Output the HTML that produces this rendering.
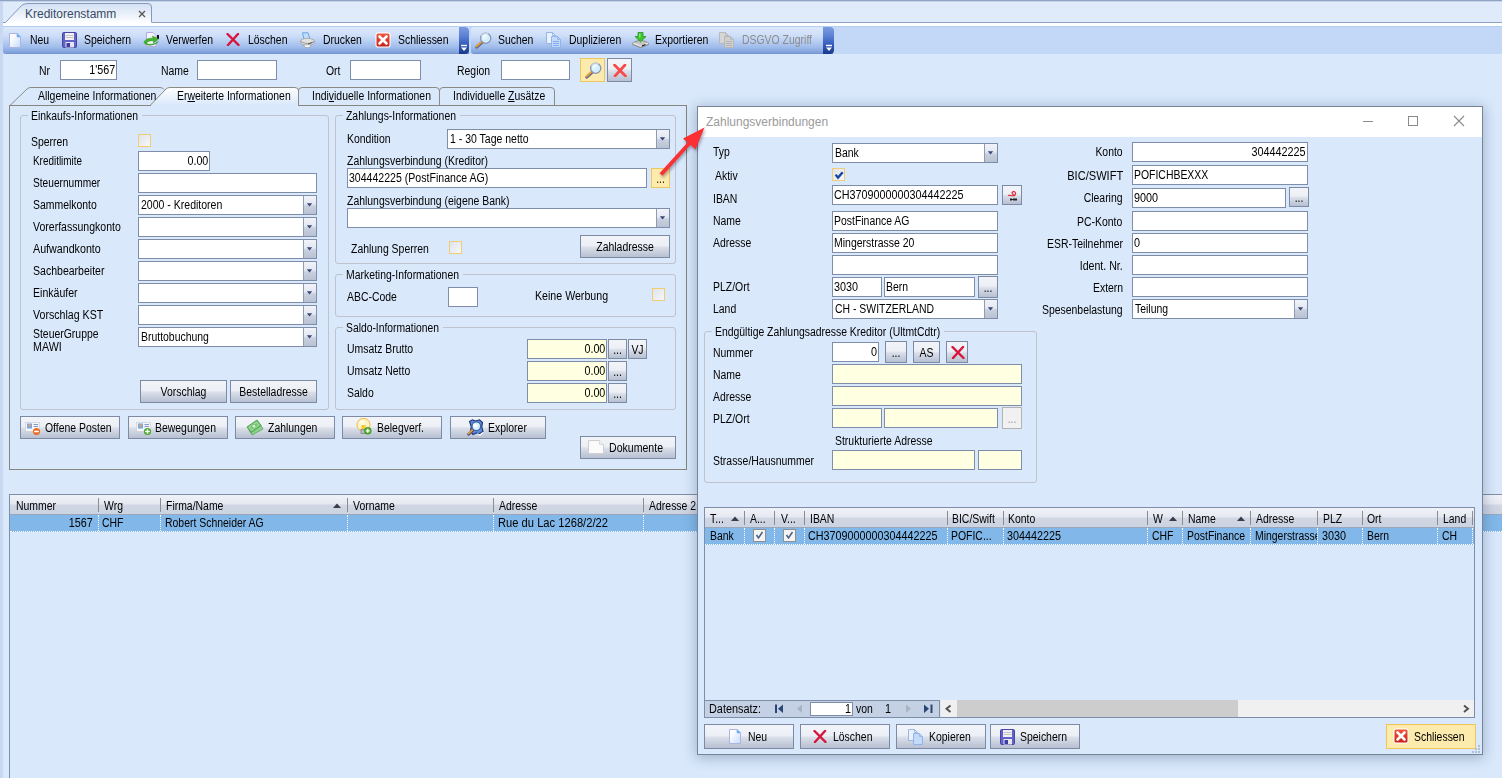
<!DOCTYPE html>
<html lang="de"><head><meta charset="utf-8"><title>Kreditorenstamm</title><style>
html,body{margin:0;padding:0}
body{width:1502px;height:778px;overflow:hidden;background:#d9e8fb;position:relative;font:12.5px "Liberation Sans",sans-serif;color:#000}
.a{position:absolute;box-sizing:border-box}
.t{white-space:nowrap;line-height:16px;font-size:12.5px;transform-origin:0 50%}
.r{transform-origin:100% 50% !important}
u{text-decoration:underline}
.f{border:1px solid #7f8ea8;background:#fff;overflow:hidden}
.ft{position:absolute;top:0;white-space:nowrap;font-size:12.5px;transform-origin:0 50%}
.dd{position:absolute;right:0;top:0;bottom:0;width:13px;box-sizing:border-box;border-left:1px solid #8f9cb4;background:linear-gradient(#f1f3f9 0%,#e4e8f1 45%,#c9d0de 55%,#b9c2d3 100%)}
.dd i{position:absolute;left:3px;top:8px;border:2.5px solid transparent;border-top:3px solid #33466f;border-bottom:none;width:0;height:0}
.b{border:1px solid #7d8aa3;background:linear-gradient(#f2f4f9 0%,#eceff5 45%,#d9dee8 55%,#b7c0d2 100%);text-align:center}
.b.hot{background:#fdeaad;border-color:#efc65c}
.b.dis{background:#f1f1f1;border-color:#b4b4b4;color:#9a9a9a}
.bt{display:block;white-space:nowrap;font-size:12.5px;transform-origin:50% 50%}
.ck{border:1px solid #f0cd72;background:linear-gradient(135deg,#dfe3ec,#f6f7fa)}
.g{border:1px solid #bfc3cb;border-radius:3px}
.tb{border-radius:3px 0 0 3px;background:linear-gradient(#dde9fb 0%,#cfdff8 30%,#b9cff3 52%,#9fbceb 75%,#7d9fda 96%,#6b8dcb 100%)}
.tbend{border-radius:0 4px 4px 0;background:linear-gradient(#7a9be0 0%,#5f84d6 30%,#3a62be 60%,#17388c 100%)}
.gh{background:linear-gradient(#f0f2f8 0%,#e6e9f1 45%,#d0d6e3 55%,#ccd3e1 100%);border-bottom:1px solid #9ba6bb}
.sel{background:#82b8e9;border-bottom:1px dotted #fff}
.dlg{border:1px solid #76849b;background:#d9e8fb;box-shadow:0 2px 12px 1px rgba(30,50,90,.30)}
</style></head><body>
<div class="a " style="left:0px;top:2px;width:1502px;height:21px;background:#dfeafb;"></div>
<div class="a " style="left:0px;top:0px;width:3px;height:778px;background:#c7d8f0;"></div>
<div class="a " style="left:0px;top:0px;width:1502px;height:1px;background:#8fa3c4;"></div>
<div class="a " style="left:0px;top:1px;width:1502px;height:1px;background:#c6d4e9;"></div>
<svg class="a" style="left:0;top:0" width="160" height="28" viewBox="0 0 160 28"><defs><linearGradient id="tg" x1="0" y1="0" x2="0" y2="1"><stop offset="0" stop-color="#d2e0f4"/><stop offset=".85" stop-color="#ffffff"/></linearGradient></defs><path d="M3 22.500 H5.500 L21.500 5.500 Q24 3.500 28 3.500 H148 Q151.500 3.500 151.500 7 V22.500 H160 V27 H3 Z" fill="url(#tg)"/><path d="M3 22.500 H5.500 L21.500 5.500 Q24 3.500 28 3.500 H148 Q151.500 3.500 151.500 7 V22.500" fill="none" stroke="#8699ba" stroke-width="1"/></svg>
<div class="a " style="left:152px;top:22px;width:1350px;height:1px;background:#8fa3c6;"></div>
<div class="a " style="left:3px;top:23px;width:1499px;height:3px;background:#fff;"></div>
<div class="a" style="left:25px;top:6px;font:12px 'Liberation Sans',sans-serif;color:#3a4a66;line-height:16px">Kreditorenstamm</div>
<svg class="a" style="left:138px;top:10px" width="8" height="8" viewBox="0 0 8 8"><path d="M1 1 L7 7 M7 1 L1 7" stroke="#555" stroke-width="1.3"/></svg>
<div class="a " style="left:3px;top:26px;width:1499px;height:28px;background:#c3d8f6;border-top:1px solid #b4cdf3;"></div>
<div class="a tb" style="left:3px;top:27px;width:466px;height:27px;"></div>
<div class="a tbend" style="left:459px;top:27px;width:10px;height:27px;"><svg class="a" style="left:1px;top:17px" width="8" height="8" viewBox="0 0 8 8"><path d="M1 1.5 H7" stroke="#fff" stroke-width="1.4"/><path d="M1 3.5 H7 L4 7 Z" fill="#fff"/><path d="M2 2.5 H8 L5 6 Z" fill="#000" opacity=".0"/></svg></div>
<div class="a tb" style="left:471px;top:27px;width:362px;height:27px;"></div>
<div class="a tbend" style="left:823px;top:27px;width:11px;height:27px;"><svg class="a" style="left:2px;top:17px" width="8" height="8" viewBox="0 0 8 8"><path d="M1 1.5 H7" stroke="#fff" stroke-width="1.4"/><path d="M1 3.5 H7 L4 7 Z" fill="#fff"/></svg></div>
<svg class="a" style="left:9px;top:33px" width="12" height="15" viewBox="0 0 12 15"><defs><linearGradient id="gn" x1="0" y1="0" x2="1" y2="1"><stop offset=".25" stop-color="#fff"/><stop offset="1" stop-color="#bfdcff"/></linearGradient></defs><path d="M0.5 0.5 H8 L11.5 4 V14.5 H0.5 Z" fill="url(#gn)" stroke="#b0b2e2" stroke-width="1"/><path d="M8 0.5 V4 H11.5 Z" fill="#5aa6f4" stroke="#8ab4ee" stroke-width=".6"/></svg>
<div class="a t" style="left:30px;top:32px;transform:scaleX(0.835);">Neu</div>
<svg class="a" style="left:62px;top:32px" width="15" height="16" viewBox="0 0 15 16"><rect x="0.5" y="0.5" width="14" height="15" rx="1.2" fill="#6262c9" stroke="#4545a4"/><rect x="3" y="1" width="9" height="7" fill="#f1f1f4"/><path d="M3.5 3.500 H11.500 M3.500 5.500 H11.500" stroke="#c4c4cb" stroke-width="1"/><rect x="3.500" y="10" width="8.500" height="5.500" fill="#e6e6f0"/><rect x="4.500" y="11" width="3.500" height="4" fill="#3c3ca2"/></svg>
<div class="a t" style="left:84px;top:32px;transform:scaleX(0.835);">Speichern</div>
<svg class="a" style="left:143px;top:32px" width="17" height="15" viewBox="0 0 17 15"><path d="M3.5 0.5 H10 L13 3.5 V14.5 H3.5 Z" fill="#f4f6ff" stroke="#b6a8e0"/><rect x="14" y="3" width="2" height="4" fill="#111"/><path d="M1 10.5 C2 6.5 8 5.5 10 6.5 L9.5 4 L15.5 7 L10.5 11 L10.2 8.8 C7 8.5 4 9.5 3.5 11.5 C6 13 11 12.5 15.5 9.5 C12 14 3 14.5 1 10.5 Z" fill="#3fb52a" stroke="#2a8c1a" stroke-width=".5"/></svg>
<div class="a t" style="left:166px;top:32px;transform:scaleX(0.835);">Verwerfen</div>
<svg class="a" style="left:226px;top:33px" width="14" height="13" viewBox="0 0 14 13"><path d="M1.5 1 L12.5 12 M12 1 L2 12" stroke="#d8143c" stroke-width="2.4" stroke-linecap="round" fill="none"/></svg>
<div class="a t" style="left:248px;top:32px;transform:scaleX(0.835);">Löschen</div>
<svg class="a" style="left:300px;top:32px" width="15" height="16" viewBox="0 0 15 16"><path d="M2.500 0.800 H8 L10 7.500 H4 Z" fill="#bfe0fb" stroke="#5f9ee2" stroke-width=".9"/><path d="M0.800 8 Q7 4.500 14.200 8 V11.500 Q8 16 0.800 11.500 Z" fill="#e2e2e2" stroke="#a2a2a2" stroke-width=".8"/><path d="M0.800 9.500 Q7.500 13.500 14.200 9.500" stroke="#8e8e8e" fill="none" stroke-width=".9"/><path d="M3.500 12.800 L5.500 15.600 H9.500 L11 12.800 Z" fill="#fafafa" stroke="#9a9a9a" stroke-width=".7"/><path d="M8 12 L12.500 10.500" stroke="#555" stroke-width="1"/></svg>
<div class="a t" style="left:323px;top:32px;transform:scaleX(0.835);">Drucken</div>
<svg class="a" style="left:375px;top:32px" width="16" height="16" viewBox="0 0 16 16"><defs><linearGradient id="gc375" x1="0" y1="0" x2="0" y2="1"><stop offset="0" stop-color="#f0553a"/><stop offset="1" stop-color="#c8201a"/></linearGradient></defs><rect x="0.5" y="0.5" width="15" height="15" rx="2" fill="#fff"/><rect x="1.5" y="1.5" width="13" height="13" rx="1.5" fill="url(#gc375)"/><path d="M4.5 4.5 L11.5 11.5 M11.5 4.5 L4.5 11.5" stroke="#fff" stroke-width="2.6" stroke-linecap="round"/></svg>
<div class="a t" style="left:398px;top:32px;transform:scaleX(0.835);">Schliessen</div>
<svg class="a" style="left:475px;top:32px" width="17" height="17" viewBox="0 0 17 17"><defs><radialGradient id="lg47532" cx=".35" cy=".3" r=".8"><stop offset="0" stop-color="#f4fcff"/><stop offset=".6" stop-color="#cdeefd"/><stop offset="1" stop-color="#e8f6ff"/></radialGradient></defs><path d="M7.300 10.200 L1.800 15.200" stroke="#666a8c" stroke-width="3" stroke-linecap="round"/><path d="M6.700 9.600 L1.500 14.300" stroke="#f0a02c" stroke-width="1.800" stroke-linecap="round"/><circle cx="10.700" cy="6.200" r="5.100" fill="url(#lg47532)" stroke="#8c94b4" stroke-width="1.300"/><path d="M6.400 4 A5 5 0 0 1 13 1.800" fill="none" stroke="#c9d2e6" stroke-width="1.200"/></svg>
<div class="a t" style="left:498px;top:32px;transform:scaleX(0.835);">Suchen</div>
<svg class="a" style="left:546px;top:32px" width="16" height="16" viewBox="0 0 16 16"><path d="M0.500 0.500 H6.500 L9.500 3.500 V11.500 H0.500 Z" fill="#e8f1fd" stroke="#8fb0e4" stroke-width=".9"/><path d="M6.500 0.500 V3.500 H9.500" fill="none" stroke="#8fb0e4" stroke-width=".8"/><path d="M5.500 4.500 H11.500 L14.500 7.500 V15.500 H5.500 Z" fill="#c3dafb" stroke="#8fb0e4" stroke-width=".9"/><path d="M11.500 4.500 V7.500 H14.500" fill="none" stroke="#8fb0e4" stroke-width=".8"/><path d="M7 9.500 H13 M7 11.500 H13 M7 13.500 H13" stroke="#79a6ee" stroke-width=".9"/></svg>
<div class="a t" style="left:569px;top:32px;transform:scaleX(0.835);">Duplizieren</div>
<svg class="a" style="left:632px;top:32px" width="17" height="16" viewBox="0 0 17 16"><path d="M0.600 10.800 L8.500 7.800 L16.400 10.800 V12.600 L8.500 15.600 L0.600 12.600 Z" fill="#c4c4c4" stroke="#7e7e7e" stroke-width=".8"/><path d="M0.600 10.800 L8.500 13.800 L16.400 10.800" fill="none" stroke="#f4f4f4" stroke-width=".9"/><path d="M6 0.500 H11 V4.500 H14 L8.500 9.800 L3 4.500 H6 Z" fill="#3ec52c" stroke="#23931a" stroke-width=".8"/><path d="M7 1.500 H8.500 V5.500 H7 Z" fill="#8be67e"/><path d="M10 13.800 L13.500 12.500" stroke="#222" stroke-width="1.300"/></svg>
<div class="a t" style="left:655px;top:32px;transform:scaleX(0.835);">Exportieren</div>
<svg class="a" style="left:719px;top:32px" width="16" height="16" viewBox="0 0 16 16"><path d="M0.500 0.500 H6.500 L9.500 3.500 V11.500 H0.500 Z" fill="#d6d6d6" stroke="#b4b4b4" stroke-width=".9"/><path d="M6.500 0.500 V3.500 H9.500" fill="none" stroke="#b4b4b4" stroke-width=".8"/><path d="M5.500 4.500 H11.500 L14.500 7.500 V15.500 H5.500 Z" fill="#d0d0d0" stroke="#b4b4b4" stroke-width=".9"/><path d="M11.500 4.500 V7.500 H14.500" fill="none" stroke="#b4b4b4" stroke-width=".8"/><path d="M7 9.500 H13 M7 11.500 H13 M7 13.500 H13" stroke="#b0b0b0" stroke-width=".9"/></svg>
<div class="a t" style="left:742px;top:32px;transform:scaleX(0.835);color:#8c8c8c">DSGVO Zugriff</div>
<div class="a t" style="left:39px;top:63px;transform:scaleX(0.835);">Nr</div>
<div class="a f" style="left:60px;top:60px;width:57px;height:20px;background:#fff;"><span class="ft r" style="right:1px;line-height:18px;transform:scaleX(0.859)">1'567</span></div>
<div class="a t" style="left:161px;top:63px;transform:scaleX(0.835);">Name</div>
<div class="a f" style="left:197px;top:60px;width:80px;height:20px;background:#fff;"></div>
<div class="a t" style="left:326px;top:63px;transform:scaleX(0.835);">Ort</div>
<div class="a f" style="left:350px;top:60px;width:71px;height:20px;background:#fff;"></div>
<div class="a t" style="left:457px;top:63px;transform:scaleX(0.835);">Region</div>
<div class="a f" style="left:501px;top:60px;width:69px;height:20px;background:#fff;"></div>
<div class="a b hot" style="left:580px;top:58px;width:25px;height:24px;"><svg class="a" style="left:4px;top:3px" width="17" height="17" viewBox="0 0 17 17"><defs><radialGradient id="lg43" cx=".35" cy=".3" r=".8"><stop offset="0" stop-color="#f4fcff"/><stop offset=".6" stop-color="#cdeefd"/><stop offset="1" stop-color="#e8f6ff"/></radialGradient></defs><path d="M7.300 10.200 L1.800 15.200" stroke="#666a8c" stroke-width="3" stroke-linecap="round"/><path d="M6.700 9.600 L1.500 14.300" stroke="#f0a02c" stroke-width="1.800" stroke-linecap="round"/><circle cx="10.700" cy="6.200" r="5.100" fill="url(#lg43)" stroke="#8c94b4" stroke-width="1.300"/><path d="M6.400 4 A5 5 0 0 1 13 1.800" fill="none" stroke="#c9d2e6" stroke-width="1.200"/></svg><span class="bt" style="line-height:22px;padding-top:1px;transform:scaleX(1)"></span></div>
<div class="a b " style="left:607px;top:58px;width:25px;height:24px;"><svg class="a" style="left:5px;top:5px" width="14" height="13" viewBox="0 0 14 13"><path d="M1.5 1 L12.5 12 M12 1 L2 12" stroke="#f84a4a" stroke-width="2.7" stroke-linecap="round" fill="none"/></svg><span class="bt" style="line-height:22px;padding-top:1px;transform:scaleX(1)"></span></div>
<svg class="a" style="left:0;top:84px" width="700" height="24" viewBox="0 0 700 24"><defs><linearGradient id="ta" x1="0" y1="0" x2="0" y2="1"><stop offset="0" stop-color="#ffffff"/><stop offset="1" stop-color="#d9e8fb"/></linearGradient></defs>
<path d="M10 21.500 L27 5 Q28.500 3.500 31 3.500 H160 Q163 3.500 164 5.500" fill="none" stroke="#8b8b86"/>
<path d="M151 21.5 L166 5 Q167.500 3.500 170 3.500 H295 Q298.500 3.500 298.500 7 V21.500 Z" fill="url(#ta)"/>
<path d="M150 21.500 L166 5 Q167.500 3.500 170 3.500 H295 Q298.500 3.500 298.500 7 V21.500" fill="none" stroke="#8b8b86"/>
<path d="M298.500 7 Q298.500 3.500 302 3.500 H436 Q439.500 3.500 439.500 7 V21.500" fill="none" stroke="#8b8b86"/>
<path d="M439.500 7 Q439.500 3.500 443 3.500 H551 Q554.500 3.500 554.500 7 V21.500" fill="none" stroke="#8b8b86"/>
</svg>
<div class="a " style="left:9px;top:105px;width:678px;height:365px;border:1px solid #86867f;border-top:none;"></div>
<div class="a " style="left:9px;top:105px;width:142px;height:1px;background:#86867f;"></div>
<div class="a " style="left:298px;top:105px;width:389px;height:1px;background:#86867f;"></div>
<div class="a t" style="left:38px;top:88px;transform:scaleX(0.835);">All<u>g</u>emeine Informationen</div>
<div class="a t" style="left:177px;top:88px;transform:scaleX(0.835);">Er<u>w</u>eiterte Informationen</div>
<div class="a t" style="left:312px;top:88px;transform:scaleX(0.835);">Indi<u>v</u>iduelle Informationen</div>
<div class="a t" style="left:453px;top:88px;transform:scaleX(0.835);">Individuelle <u>Z</u>usätze</div>
<div class="a g" style="left:20px;top:115px;width:309px;height:295px;"></div>
<div class="a " style="left:28px;top:115px;width:114px;height:1px;background:#d9e8fb;"></div>
<div class="a t" style="left:31px;top:108px;transform:scaleX(0.832);">Einkaufs-Informationen</div>
<div class="a t" style="left:31px;top:134px;transform:scaleX(0.835);">Sperren</div>
<div class="a ck" style="left:138px;top:134px;width:13px;height:13px;"></div>
<div class="a t" style="left:33px;top:153px;transform:scaleX(0.793);">Kreditlimite</div>
<div class="a t" style="left:33px;top:175px;transform:scaleX(0.813);">Steuernummer</div>
<div class="a t" style="left:33px;top:197px;transform:scaleX(0.835);">Sammelkonto</div>
<div class="a t" style="left:33px;top:219px;transform:scaleX(0.842);">Vorerfassungkonto</div>
<div class="a t" style="left:33px;top:241px;transform:scaleX(0.855);">Aufwandkonto</div>
<div class="a t" style="left:33px;top:263px;transform:scaleX(0.843);">Sachbearbeiter</div>
<div class="a t" style="left:33px;top:285px;transform:scaleX(0.845);">Einkäufer</div>
<div class="a t" style="left:33px;top:307px;transform:scaleX(0.85);">Vorschlag KST</div>
<div class="a f" style="left:138px;top:151px;width:72px;height:20px;background:#fff;"><span class="ft r" style="right:1px;line-height:18px;transform:scaleX(0.857)">0.00</span></div>
<div class="a f" style="left:138px;top:173px;width:179px;height:20px;background:#fff;"></div>
<div class="a f cb" style="left:138px;top:195px;width:179px;height:20px;"><span class="ft" style="left:2px;line-height:18px;transform:scaleX(0.842)">2000 - Kreditoren</span><span class="dd"><svg class="a" style="left:2px;top:50%;margin-top:-2px" width="7" height="4" viewBox="0 0 7 4"><path d="M0.800 0.300 H6.200 L3.500 3.600 Z" fill="#35477a"/></svg></span></div>
<div class="a f cb" style="left:138px;top:217px;width:179px;height:20px;"><span class="ft" style="left:2px;line-height:18px;transform:scaleX(1)"></span><span class="dd"><svg class="a" style="left:2px;top:50%;margin-top:-2px" width="7" height="4" viewBox="0 0 7 4"><path d="M0.800 0.300 H6.200 L3.500 3.600 Z" fill="#35477a"/></svg></span></div>
<div class="a f cb" style="left:138px;top:239px;width:179px;height:20px;"><span class="ft" style="left:2px;line-height:18px;transform:scaleX(1)"></span><span class="dd"><svg class="a" style="left:2px;top:50%;margin-top:-2px" width="7" height="4" viewBox="0 0 7 4"><path d="M0.800 0.300 H6.200 L3.500 3.600 Z" fill="#35477a"/></svg></span></div>
<div class="a f cb" style="left:138px;top:261px;width:179px;height:20px;"><span class="ft" style="left:2px;line-height:18px;transform:scaleX(1)"></span><span class="dd"><svg class="a" style="left:2px;top:50%;margin-top:-2px" width="7" height="4" viewBox="0 0 7 4"><path d="M0.800 0.300 H6.200 L3.500 3.600 Z" fill="#35477a"/></svg></span></div>
<div class="a f cb" style="left:138px;top:283px;width:179px;height:20px;"><span class="ft" style="left:2px;line-height:18px;transform:scaleX(1)"></span><span class="dd"><svg class="a" style="left:2px;top:50%;margin-top:-2px" width="7" height="4" viewBox="0 0 7 4"><path d="M0.800 0.300 H6.200 L3.500 3.600 Z" fill="#35477a"/></svg></span></div>
<div class="a f cb" style="left:138px;top:305px;width:179px;height:20px;"><span class="ft" style="left:2px;line-height:18px;transform:scaleX(1)"></span><span class="dd"><svg class="a" style="left:2px;top:50%;margin-top:-2px" width="7" height="4" viewBox="0 0 7 4"><path d="M0.800 0.300 H6.200 L3.500 3.600 Z" fill="#35477a"/></svg></span></div>
<div class="a f cb" style="left:138px;top:327px;width:179px;height:20px;"><span class="ft" style="left:2px;line-height:18px;transform:scaleX(0.835)">Bruttobuchung</span><span class="dd"><svg class="a" style="left:2px;top:50%;margin-top:-2px" width="7" height="4" viewBox="0 0 7 4"><path d="M0.800 0.300 H6.200 L3.500 3.600 Z" fill="#35477a"/></svg></span></div>
<div class="a t" style="left:33px;top:326px;transform:scaleX(0.835);">SteuerGruppe</div>
<div class="a t" style="left:33px;top:339px;transform:scaleX(0.855);">MAWI</div>
<div class="a b " style="left:140px;top:380px;width:87px;height:23px;"><span class="bt" style="line-height:21px;padding-top:1px;transform:scaleX(0.835)">Vorschlag</span></div>
<div class="a b " style="left:230px;top:380px;width:87px;height:23px;"><span class="bt" style="line-height:21px;padding-top:1px;transform:scaleX(0.835)">Bestelladresse</span></div>
<div class="a g" style="left:335px;top:115px;width:341px;height:149px;"></div>
<div class="a " style="left:343px;top:115px;width:117px;height:1px;background:#d9e8fb;"></div>
<div class="a t" style="left:346px;top:108px;transform:scaleX(0.833);">Zahlungs-Informationen</div>
<div class="a t" style="left:347px;top:131px;transform:scaleX(0.835);">Kondition</div>
<div class="a f cb" style="left:447px;top:129px;width:223px;height:20px;"><span class="ft" style="left:2px;line-height:18px;transform:scaleX(0.84)">1 - 30 Tage netto</span><span class="dd"><svg class="a" style="left:2px;top:50%;margin-top:-2px" width="7" height="4" viewBox="0 0 7 4"><path d="M0.800 0.300 H6.200 L3.500 3.600 Z" fill="#35477a"/></svg></span></div>
<div class="a t" style="left:347px;top:153px;transform:scaleX(0.835);">Zahlungsverbindung (Kreditor)</div>
<div class="a f" style="left:347px;top:168px;width:300px;height:20px;background:#fff;"><span class="ft" style="left:1px;line-height:18px;transform:scaleX(0.845)">304442225 (PostFinance AG)</span></div>
<div class="a b hot" style="left:651px;top:168px;width:19px;height:20px;color:#2a2200"><span class="bt" style="line-height:18px;padding-top:1px;transform:scaleX(0.835)">...</span></div>
<div class="a t" style="left:347px;top:193px;transform:scaleX(0.835);">Zahlungsverbindung (eigene Bank)</div>
<div class="a f cb" style="left:347px;top:208px;width:323px;height:20px;"><span class="ft" style="left:2px;line-height:18px;transform:scaleX(1)"></span><span class="dd"><svg class="a" style="left:2px;top:50%;margin-top:-2px" width="7" height="4" viewBox="0 0 7 4"><path d="M0.800 0.300 H6.200 L3.500 3.600 Z" fill="#35477a"/></svg></span></div>
<div class="a t" style="left:351px;top:241px;transform:scaleX(0.835);">Zahlung Sperren</div>
<div class="a ck" style="left:449px;top:241px;width:13px;height:13px;"></div>
<div class="a b " style="left:580px;top:235px;width:90px;height:23px;"><span class="bt" style="line-height:21px;padding-top:1px;transform:scaleX(0.835)">Zahladresse</span></div>
<div class="a g" style="left:335px;top:274px;width:341px;height:43px;"></div>
<div class="a " style="left:343px;top:274px;width:120px;height:1px;background:#d9e8fb;"></div>
<div class="a t" style="left:346px;top:267px;transform:scaleX(0.834);">Marketing-Informationen</div>
<div class="a t" style="left:347px;top:289px;transform:scaleX(0.835);">ABC-Code</div>
<div class="a f" style="left:448px;top:287px;width:30px;height:20px;background:#fff;"></div>
<div class="a t" style="left:535px;top:288px;transform:scaleX(0.85);">Keine Werbung</div>
<div class="a ck" style="left:652px;top:288px;width:13px;height:13px;"></div>
<div class="a g" style="left:335px;top:327px;width:341px;height:83px;"></div>
<div class="a " style="left:343px;top:327px;width:100px;height:1px;background:#d9e8fb;"></div>
<div class="a t" style="left:346px;top:320px;transform:scaleX(0.826);">Saldo-Informationen</div>
<div class="a t" style="left:347px;top:341px;transform:scaleX(0.835);">Umsatz Brutto</div>
<div class="a f" style="left:527px;top:339px;width:80px;height:20px;background:#ffffe1;"><span class="ft r" style="right:1px;line-height:18px;transform:scaleX(0.857)">0.00</span></div>
<div class="a b " style="left:608px;top:339px;width:19px;height:20px;"><span class="bt" style="line-height:18px;padding-top:1px;transform:scaleX(0.835)">...</span></div>
<div class="a t" style="left:347px;top:363px;transform:scaleX(0.835);">Umsatz Netto</div>
<div class="a f" style="left:527px;top:361px;width:80px;height:20px;background:#ffffe1;"><span class="ft r" style="right:1px;line-height:18px;transform:scaleX(0.857)">0.00</span></div>
<div class="a b " style="left:608px;top:361px;width:19px;height:20px;"><span class="bt" style="line-height:18px;padding-top:1px;transform:scaleX(0.835)">...</span></div>
<div class="a t" style="left:347px;top:385px;transform:scaleX(0.835);">Saldo</div>
<div class="a f" style="left:527px;top:383px;width:80px;height:20px;background:#ffffe1;"><span class="ft r" style="right:1px;line-height:18px;transform:scaleX(0.857)">0.00</span></div>
<div class="a b " style="left:608px;top:383px;width:19px;height:20px;"><span class="bt" style="line-height:18px;padding-top:1px;transform:scaleX(0.835)">...</span></div>
<div class="a b " style="left:628px;top:339px;width:19px;height:20px;"><span class="bt" style="line-height:18px;padding-top:1px;transform:scaleX(0.835)">VJ</span></div>
<div class="a b " style="left:20px;top:416px;width:100px;height:23px;"><svg class="a" style="left:4px;top:3px" width="16" height="16" viewBox="0 0 16 16"><rect x="0.5" y="2.5" width="14" height="9" fill="#f6f6f8" stroke="#c8c8d0" stroke-width=".6"/><rect x="2" y="3.5" width="5" height="5" fill="#6fa8e8"/><circle cx="4.5" cy="5.5" r="1.4" fill="#e8a070"/><path d="M8.5 4.5 H13 M8.5 6.5 H13" stroke="#7a9ad8" stroke-width="1"/><circle cx="11.5" cy="11.5" r="3.6" fill="#f06a20"/><path d="M9.2 11.5 H13.8" stroke="#fff" stroke-width="1.6"/></svg><span class="a t" style="left:24px;top:1px;line-height:21px;transform:scaleX(0.835)">Offene Posten</span></div>
<div class="a b " style="left:128px;top:416px;width:100px;height:23px;"><svg class="a" style="left:7px;top:3px" width="16" height="16" viewBox="0 0 16 16"><rect x="0.5" y="2.5" width="14" height="9" fill="#f6f6f8" stroke="#c8c8d0" stroke-width=".6"/><rect x="2" y="3.5" width="5" height="5" fill="#6fa8e8"/><circle cx="4.5" cy="5.5" r="1.4" fill="#e8a070"/><path d="M8.5 4.5 H13 M8.5 6.5 H13" stroke="#7a9ad8" stroke-width="1"/><circle cx="11.5" cy="11.5" r="3.6" fill="#4aa62c"/><path d="M9.2 11.5 H13.8 M11.5 9.2 V13.8" stroke="#fff" stroke-width="1.4"/></svg><span class="a t" style="left:26px;top:1px;line-height:21px;transform:scaleX(0.835)">Bewegungen</span></div>
<div class="a b " style="left:235px;top:416px;width:100px;height:23px;"><svg class="a" style="left:10px;top:2px" width="18" height="17" viewBox="0 0 18 17"><path d="M3 11 L14 5 L17 10 L6 16 Z" fill="#8fd08c" stroke="#58a858" stroke-width=".8"/><path d="M1 8 L11 1 L15 6.500 L5 13.500 Z" fill="#76c674" stroke="#4a9e4a" stroke-width=".9"/><path d="M3.300 8.200 L10.600 3.200 L12.800 6.200 L5.500 11.200 Z" fill="none" stroke="#b5e3b1" stroke-width=".9"/><circle cx="8" cy="7.200" r="1.900" fill="#d4f0d0" stroke="#5aae58" stroke-width=".6"/></svg><span class="a t" style="left:32px;top:1px;line-height:21px;transform:scaleX(0.835)">Zahlungen</span></div>
<div class="a b " style="left:342px;top:416px;width:100px;height:23px;"><svg class="a" style="left:13px;top:1px" width="16" height="17" viewBox="0 0 16 17"><circle cx="7.500" cy="6.800" r="6.500" fill="#fdf3c0" stroke="#f4b84c" stroke-width="1"/><circle cx="6.200" cy="5" r="2.800" fill="#fffbe2"/><rect x="5.500" y="7" width="4" height="4.500" fill="#f8c838"/><rect x="5" y="11.500" width="5" height="4" fill="#bcbcc2" stroke="#77777e" stroke-width=".7"/><circle cx="11.800" cy="12.800" r="3.500" fill="#4fae2e" stroke="#2f7e1a" stroke-width=".5"/><path d="M9.800 12.800 H13.800 M11.800 10.800 V14.800" stroke="#fff" stroke-width="1.300"/></svg><span class="a t" style="left:34px;top:1px;line-height:21px;transform:scaleX(0.835)">Belegverf.</span></div>
<div class="a b " style="left:450px;top:416px;width:96px;height:23px;"><svg class="a" style="left:16px;top:2px" width="17" height="17" viewBox="0 0 17 17"><path d="M2.500 2.500 L5.500 0.800 L8.500 2 L12.500 0.800 L15.500 3.500 L14.800 8 L16 12.500 L12.500 14.800 L9 14 L6 15.500 L3.500 12 L4.200 7.500 Z" fill="#5f8bd6" stroke="#1c3474" stroke-width="1.100"/><path d="M10 14.800 L13 16 L16 13.500" fill="none" stroke="#f4f8ff" stroke-width="1.300"/><path d="M5.800 11.200 L1.600 15.200" stroke="#4a4f78" stroke-width="2.800" stroke-linecap="round"/><path d="M5.500 10.800 L1.500 14.600" stroke="#f09a2c" stroke-width="1.600" stroke-linecap="round"/><circle cx="9.300" cy="7.300" r="4.300" fill="#d6f3ff" stroke="#3e62a8" stroke-width="1.200"/><circle cx="8.400" cy="6.300" r="1.900" fill="#ffffff"/></svg><span class="a t" style="left:37px;top:1px;line-height:21px;transform:scaleX(0.835)">Explorer</span></div>
<div class="a b " style="left:580px;top:436px;width:96px;height:23px;"><svg class="a" style="left:7px;top:3px" width="16" height="14" viewBox="0 0 16 14"><path d="M0.500 0.500 H11.500 L15.500 4.500 V13.500 H0.500 Z" fill="#fbfbfb" stroke="#cfcfd2" stroke-width="1"/><path d="M11.500 0.500 V4.500 H15.500" fill="#f0f0f0" stroke="#d4d4d6" stroke-width=".8"/></svg><span class="a t" style="left:28px;top:1px;line-height:21px;transform:scaleX(0.845)">Dokumente</span></div>
<div class="a " style="left:9px;top:494px;width:1493px;height:296px;border:1px solid #7f8ea8;border-right:none;"></div>
<div class="a gh" style="left:10px;top:495px;width:1492px;height:20px;"></div>
<div class="a " style="left:98px;top:498px;width:1px;height:14px;background:#8d8d8d;"></div>
<div class="a " style="left:160px;top:498px;width:1px;height:14px;background:#8d8d8d;"></div>
<div class="a " style="left:347px;top:498px;width:1px;height:14px;background:#8d8d8d;"></div>
<div class="a " style="left:493px;top:498px;width:1px;height:14px;background:#8d8d8d;"></div>
<div class="a " style="left:643px;top:498px;width:1px;height:14px;background:#8d8d8d;"></div>
<div class="a t" style="left:16px;top:498px;transform:scaleX(0.835);">Nummer</div>
<div class="a t" style="left:104px;top:498px;transform:scaleX(0.835);">Wrg</div>
<div class="a t" style="left:166px;top:498px;transform:scaleX(0.835);">Firma/Name</div>
<div class="a t" style="left:353px;top:498px;transform:scaleX(0.835);">Vorname</div>
<div class="a t" style="left:499px;top:498px;transform:scaleX(0.835);">Adresse</div>
<div class="a t" style="left:649px;top:498px;transform:scaleX(0.838);">Adresse 2</div>
<svg class="a" style="left:333px;top:503px" width="8" height="5" viewBox="0 0 8 5"><path d="M0 5 L4 0.500 L8 5 Z" fill="#3a3a4a"/></svg>
<div class="a sel" style="left:10px;top:515px;width:1492px;height:17px;"></div>
<div class="a " style="left:98px;top:515px;width:1px;height:16px;border-left:1px dotted #fff;"></div>
<div class="a " style="left:160px;top:515px;width:1px;height:16px;border-left:1px dotted #fff;"></div>
<div class="a " style="left:347px;top:515px;width:1px;height:16px;border-left:1px dotted #fff;"></div>
<div class="a " style="left:493px;top:515px;width:1px;height:16px;border-left:1px dotted #fff;"></div>
<div class="a " style="left:643px;top:515px;width:1px;height:16px;border-left:1px dotted #fff;"></div>
<div class="a t r" style="right:1409px;top:515px;transform:scaleX(0.865);">1567</div>
<div class="a t" style="left:102px;top:515px;transform:scaleX(0.835);">CHF</div>
<div class="a t" style="left:165px;top:515px;transform:scaleX(0.835);">Robert Schneider AG</div>
<div class="a t" style="left:498px;top:515px;transform:scaleX(0.894);">Rue du Lac 1268/2/22</div>
<div class="a dlg" style="left:697px;top:106px;width:786px;height:649px"></div>
<div class="a " style="left:698px;top:107px;width:784px;height:30px;background:#fff;"></div>
<div class="a" style="left:706px;top:114px;font:12px 'Liberation Sans',sans-serif;color:#9a9a9a;line-height:16px">Zahlungsverbindungen</div>
<svg class="a" style="left:1360px;top:112px" width="110" height="18" viewBox="1360 112 110 18"><path d="M1363 121.500 H1373" stroke="#8a8a8a"/><rect x="1408.500" y="116.500" width="9" height="9" fill="none" stroke="#8a8a8a"/><path d="M1454 116 L1464 126 M1464 116 L1454 126" stroke="#8a8a8a" stroke-width="1.1"/></svg>
<div class="a t" style="left:713px;top:144px;transform:scaleX(0.835);">Typ</div>
<div class="a f cb" style="left:832px;top:143px;width:166px;height:20px;"><span class="ft" style="left:2px;line-height:18px;transform:scaleX(0.835)">Bank</span><span class="dd"><svg class="a" style="left:2px;top:50%;margin-top:-2px" width="7" height="4" viewBox="0 0 7 4"><path d="M0.800 0.300 H6.200 L3.500 3.600 Z" fill="#35477a"/></svg></span></div>
<div class="a t" style="left:715px;top:168px;transform:scaleX(0.835);">Aktiv</div>
<div class="a ck" style="left:832px;top:168px;width:13px;height:13px;"><svg class="a" style="left:1px;top:1px" width="11" height="11" viewBox="0 0 11 11"><path d="M1.600 4.600 L4 7.600 L8.700 2.200" fill="none" stroke="#17479b" stroke-width="2.300"/></svg></div>
<div class="a t" style="left:713px;top:191px;transform:scaleX(0.835);">IBAN</div>
<div class="a f" style="left:832px;top:185px;width:166px;height:20px;background:#fff;"><span class="ft" style="left:1px;line-height:18px;transform:scaleX(0.862)">CH3709000000304442225</span></div>
<div class="a b " style="left:1002px;top:185px;width:20px;height:20px;"><svg class="a" style="left:3px;top:3px" width="13" height="13" viewBox="0 0 13 13"><path d="M2 6.500 C4 5.500 7 8 9 6 C11 4 8 1.500 6.500 3 C5 4.500 7 6 8 5" fill="none" stroke="#e0202a" stroke-width="1.1"/><path d="M4 10.500 H11 M5 9 V12 M8 9 V12 M10 9 V12" stroke="#222" stroke-width="1"/></svg><span class="bt" style="line-height:18px;padding-top:1px;transform:scaleX(1)"></span></div>
<div class="a t" style="left:713px;top:213px;transform:scaleX(0.835);">Name</div>
<div class="a f" style="left:832px;top:211px;width:166px;height:20px;background:#fff;"><span class="ft" style="left:1px;line-height:18px;transform:scaleX(0.835)">PostFinance AG</span></div>
<div class="a t" style="left:713px;top:235px;transform:scaleX(0.835);">Adresse</div>
<div class="a f" style="left:832px;top:233px;width:166px;height:20px;background:#fff;"><span class="ft" style="left:1px;line-height:18px;transform:scaleX(0.839)">Mingerstrasse 20</span></div>
<div class="a f" style="left:832px;top:255px;width:166px;height:20px;background:#fff;"></div>
<div class="a t" style="left:713px;top:279px;transform:scaleX(0.835);">PLZ/Ort</div>
<div class="a f" style="left:832px;top:277px;width:50px;height:20px;background:#fff;"><span class="ft" style="left:1px;line-height:18px;transform:scaleX(0.865)">3030</span></div>
<div class="a f" style="left:884px;top:277px;width:91px;height:20px;background:#fff;"><span class="ft" style="left:1px;line-height:18px;transform:scaleX(0.835)">Bern</span></div>
<div class="a b " style="left:978px;top:276px;width:20px;height:22px;"><span class="bt" style="line-height:20px;padding-top:1px;transform:scaleX(0.835)">...</span></div>
<div class="a t" style="left:713px;top:301px;transform:scaleX(0.835);">Land</div>
<div class="a f cb" style="left:832px;top:299px;width:166px;height:20px;"><span class="ft" style="left:2px;line-height:18px;transform:scaleX(0.835)">CH - SWITZERLAND</span><span class="dd"><svg class="a" style="left:2px;top:50%;margin-top:-2px" width="7" height="4" viewBox="0 0 7 4"><path d="M0.800 0.300 H6.200 L3.500 3.600 Z" fill="#35477a"/></svg></span></div>
<div class="a t r" style="right:379px;top:144px;transform:scaleX(0.835);">Konto</div>
<div class="a t r" style="right:379px;top:168px;transform:scaleX(0.886);">BIC/SWIFT</div>
<div class="a t r" style="right:379px;top:190px;transform:scaleX(0.835);">Clearing</div>
<div class="a t r" style="right:380px;top:214px;transform:scaleX(0.835);">PC-Konto</div>
<div class="a t r" style="right:379px;top:236px;transform:scaleX(0.835);">ESR-Teilnehmer</div>
<div class="a t r" style="right:379px;top:258px;transform:scaleX(0.848);">Ident. Nr.</div>
<div class="a t r" style="right:379px;top:280px;transform:scaleX(0.835);">Extern</div>
<div class="a t r" style="right:379px;top:302px;transform:scaleX(0.835);">Spesenbelastung</div>
<div class="a f" style="left:1132px;top:142px;width:176px;height:20px;background:#fff;"><span class="ft r" style="right:1px;line-height:18px;transform:scaleX(0.865)">304442225</span></div>
<div class="a f" style="left:1132px;top:165px;width:176px;height:20px;background:#fff;"><span class="ft" style="left:1px;line-height:18px;transform:scaleX(0.835)">POFICHBEXXX</span></div>
<div class="a f" style="left:1132px;top:188px;width:154px;height:20px;background:#fff;"><span class="ft" style="left:1px;line-height:18px;transform:scaleX(0.865)">9000</span></div>
<div class="a b " style="left:1289px;top:187px;width:20px;height:20px;"><span class="bt" style="line-height:18px;padding-top:1px;transform:scaleX(0.835)">...</span></div>
<div class="a f" style="left:1132px;top:211px;width:176px;height:20px;background:#fff;"></div>
<div class="a f" style="left:1132px;top:233px;width:176px;height:20px;background:#fff;"><span class="ft" style="left:1px;line-height:18px;transform:scaleX(0.865)">0</span></div>
<div class="a f" style="left:1132px;top:255px;width:176px;height:20px;background:#fff;"></div>
<div class="a f" style="left:1132px;top:277px;width:176px;height:20px;background:#fff;"></div>
<div class="a f cb" style="left:1132px;top:299px;width:176px;height:20px;"><span class="ft" style="left:2px;line-height:18px;transform:scaleX(0.835)">Teilung</span><span class="dd"><svg class="a" style="left:2px;top:50%;margin-top:-2px" width="7" height="4" viewBox="0 0 7 4"><path d="M0.800 0.300 H6.200 L3.500 3.600 Z" fill="#35477a"/></svg></span></div>
<div class="a g" style="left:704px;top:331px;width:333px;height:152px;"></div>
<div class="a " style="left:712px;top:331px;width:232px;height:1px;background:#d9e8fb;"></div>
<div class="a t" style="left:715px;top:324px;transform:scaleX(0.833);">Endgültige Zahlungsadresse Kreditor (UltmtCdtr)</div>
<div class="a t" style="left:713px;top:345px;transform:scaleX(0.835);">Nummer</div>
<div class="a f" style="left:832px;top:342px;width:47px;height:20px;background:#fff;"><span class="ft r" style="right:1px;line-height:18px;transform:scaleX(0.865)">0</span></div>
<div class="a b " style="left:885px;top:341px;width:22px;height:22px;"><span class="bt" style="line-height:20px;padding-top:1px;transform:scaleX(0.835)">...</span></div>
<div class="a b " style="left:913px;top:341px;width:27px;height:22px;"><span class="bt" style="line-height:20px;padding-top:1px;transform:scaleX(0.835)">AS</span></div>
<div class="a b " style="left:946px;top:341px;width:22px;height:22px;"><svg class="a" style="left:4px;top:4px" width="14" height="13" viewBox="0 0 14 13"><path d="M1.5 1 L12.5 12 M12 1 L2 12" stroke="#d8143c" stroke-width="2.4" stroke-linecap="round" fill="none"/></svg><span class="bt" style="line-height:20px;padding-top:1px;transform:scaleX(1)"></span></div>
<div class="a t" style="left:713px;top:367px;transform:scaleX(0.835);">Name</div>
<div class="a f" style="left:832px;top:364px;width:190px;height:20px;background:#ffffe1;"></div>
<div class="a t" style="left:713px;top:389px;transform:scaleX(0.835);">Adresse</div>
<div class="a f" style="left:832px;top:386px;width:190px;height:20px;background:#ffffe1;"></div>
<div class="a t" style="left:713px;top:411px;transform:scaleX(0.835);">PLZ/Ort</div>
<div class="a f" style="left:832px;top:408px;width:50px;height:20px;background:#ffffe1;"></div>
<div class="a f" style="left:884px;top:408px;width:114px;height:20px;background:#ffffe1;"></div>
<div class="a b dis" style="left:1002px;top:407px;width:20px;height:22px;"><span class="bt" style="line-height:20px;padding-top:1px;transform:scaleX(0.835)">...</span></div>
<div class="a t" style="left:835px;top:433px;transform:scaleX(0.835);">Strukturierte Adresse</div>
<div class="a t" style="left:713px;top:453px;transform:scaleX(0.835);">Strasse/Hausnummer</div>
<div class="a f" style="left:832px;top:450px;width:143px;height:20px;background:#ffffe1;"></div>
<div class="a f" style="left:978px;top:450px;width:44px;height:20px;background:#ffffe1;"></div>
<div class="a " style="left:704px;top:507px;width:771px;height:211px;border:1px solid #7f8ea8;"></div>
<div class="a gh" style="left:705px;top:508px;width:769px;height:20px;"></div>
<div class="a " style="left:744px;top:511px;width:1px;height:14px;background:#8d8d8d;"></div>
<div class="a " style="left:774px;top:511px;width:1px;height:14px;background:#8d8d8d;"></div>
<div class="a " style="left:804px;top:511px;width:1px;height:14px;background:#8d8d8d;"></div>
<div class="a " style="left:947px;top:511px;width:1px;height:14px;background:#8d8d8d;"></div>
<div class="a " style="left:1003px;top:511px;width:1px;height:14px;background:#8d8d8d;"></div>
<div class="a " style="left:1147px;top:511px;width:1px;height:14px;background:#8d8d8d;"></div>
<div class="a " style="left:1182px;top:511px;width:1px;height:14px;background:#8d8d8d;"></div>
<div class="a " style="left:1250px;top:511px;width:1px;height:14px;background:#8d8d8d;"></div>
<div class="a " style="left:1317px;top:511px;width:1px;height:14px;background:#8d8d8d;"></div>
<div class="a " style="left:1362px;top:511px;width:1px;height:14px;background:#8d8d8d;"></div>
<div class="a " style="left:1437px;top:511px;width:1px;height:14px;background:#8d8d8d;"></div>
<div class="a " style="left:1472px;top:511px;width:1px;height:14px;background:#8d8d8d;"></div>
<div class="a t" style="left:710px;top:511px;transform:scaleX(0.835);">T...</div>
<div class="a t" style="left:750px;top:511px;transform:scaleX(0.835);">A...</div>
<div class="a t" style="left:781px;top:511px;transform:scaleX(0.835);">V...</div>
<div class="a t" style="left:810px;top:511px;transform:scaleX(0.835);">IBAN</div>
<div class="a t" style="left:952px;top:511px;transform:scaleX(0.835);">BIC/Swift</div>
<div class="a t" style="left:1008px;top:511px;transform:scaleX(0.835);">Konto</div>
<div class="a t" style="left:1153px;top:511px;transform:scaleX(0.835);">W</div>
<div class="a t" style="left:1188px;top:511px;transform:scaleX(0.835);">Name</div>
<div class="a t" style="left:1256px;top:511px;transform:scaleX(0.835);">Adresse</div>
<div class="a t" style="left:1323px;top:511px;transform:scaleX(0.835);">PLZ</div>
<div class="a t" style="left:1367px;top:511px;transform:scaleX(0.835);">Ort</div>
<div class="a t" style="left:1443px;top:511px;transform:scaleX(0.835);">Land</div>
<svg class="a" style="left:731px;top:516px" width="8" height="5" viewBox="0 0 8 5"><path d="M0 5 L4 0.500 L8 5 Z" fill="#3a3a4a"/></svg>
<svg class="a" style="left:1169px;top:516px" width="8" height="5" viewBox="0 0 8 5"><path d="M0 5 L4 0.500 L8 5 Z" fill="#3a3a4a"/></svg>
<svg class="a" style="left:1237px;top:516px" width="8" height="5" viewBox="0 0 8 5"><path d="M0 5 L4 0.500 L8 5 Z" fill="#3a3a4a"/></svg>
<div class="a sel" style="left:705px;top:528px;width:769px;height:17px;"></div>
<div class="a " style="left:744px;top:528px;width:1px;height:16px;border-left:1px dotted #fff;"></div>
<div class="a " style="left:774px;top:528px;width:1px;height:16px;border-left:1px dotted #fff;"></div>
<div class="a " style="left:804px;top:528px;width:1px;height:16px;border-left:1px dotted #fff;"></div>
<div class="a " style="left:947px;top:528px;width:1px;height:16px;border-left:1px dotted #fff;"></div>
<div class="a " style="left:1003px;top:528px;width:1px;height:16px;border-left:1px dotted #fff;"></div>
<div class="a " style="left:1147px;top:528px;width:1px;height:16px;border-left:1px dotted #fff;"></div>
<div class="a " style="left:1182px;top:528px;width:1px;height:16px;border-left:1px dotted #fff;"></div>
<div class="a " style="left:1250px;top:528px;width:1px;height:16px;border-left:1px dotted #fff;"></div>
<div class="a " style="left:1317px;top:528px;width:1px;height:16px;border-left:1px dotted #fff;"></div>
<div class="a " style="left:1362px;top:528px;width:1px;height:16px;border-left:1px dotted #fff;"></div>
<div class="a " style="left:1437px;top:528px;width:1px;height:16px;border-left:1px dotted #fff;"></div>
<div class="a " style="left:1472px;top:528px;width:1px;height:16px;border-left:1px dotted #fff;"></div>
<div class="a t" style="left:710px;top:528px;transform:scaleX(0.835);">Bank</div>
<div class="a " style="left:753px;top:529px;width:13px;height:13px;background:#f4f4f4;border:1px solid #8e8f8f;"><svg class="a" style="left:1px;top:1px" width="9" height="9" viewBox="0 0 9 9"><path d="M1.500 4 L3.500 7 L7.500 1" fill="none" stroke="#4b5f86" stroke-width="1.5"/></svg></div>
<div class="a " style="left:783px;top:529px;width:13px;height:13px;background:#f4f4f4;border:1px solid #8e8f8f;"><svg class="a" style="left:1px;top:1px" width="9" height="9" viewBox="0 0 9 9"><path d="M1.500 4 L3.500 7 L7.500 1" fill="none" stroke="#4b5f86" stroke-width="1.5"/></svg></div>
<div class="a t" style="left:808px;top:528px;transform:scaleX(0.862);">CH3709000000304442225</div>
<div class="a t" style="left:951px;top:528px;transform:scaleX(0.835);">POFIC...</div>
<div class="a t" style="left:1007px;top:528px;transform:scaleX(0.865);">304442225</div>
<div class="a t" style="left:1152px;top:528px;transform:scaleX(0.835);">CHF</div>
<div class="a t" style="left:1187px;top:528px;transform:scaleX(0.835);">PostFinance</div>
<div class="a" style="left:1255px;top:528px;width:62px;height:16px;overflow:hidden"><div class="a t" style="left:0;top:0;transform:scaleX(.835)">Mingerstrasse 20</div></div>
<div class="a t" style="left:1322px;top:528px;transform:scaleX(0.865);">3030</div>
<div class="a t" style="left:1367px;top:528px;transform:scaleX(0.835);">Bern</div>
<div class="a t" style="left:1442px;top:528px;transform:scaleX(0.835);">CH</div>
<div class="a " style="left:705px;top:700px;width:235px;height:17px;background:#c4d0e4;border-right:1px solid #7f8ea8;border-top:1px solid #7f8ea8;"></div>
<div class="a t" style="left:709px;top:701px;transform:scaleX(0.87);">Datensatz:</div>
<svg class="a" style="left:774px;top:704px" width="160" height="10" viewBox="774 704 160 10"><path d="M775 704.500 H777 V713 H775 Z M783 704.500 V713 L778 708.750 Z" fill="#2b4672"/><path d="M802 704.500 V713 L797 708.750 Z" fill="#a9b3c4"/><path d="M906 704.500 V713 L911 708.750 Z" fill="#a9b3c4"/><path d="M924 704.500 V713 L929 708.750 Z M930.500 704.500 H932.500 V713 H930.500 Z" fill="#2b4672"/></svg>
<div class="a " style="left:810px;top:702px;width:43px;height:14px;background:#fff;border:1px solid #7f8ea8;"><span class="ft r" style="right:1px;line-height:13px;transform:scaleX(.86)">1</span></div>
<div class="a t" style="left:856px;top:701px;transform:scaleX(0.835);">von</div>
<div class="a t" style="left:885px;top:701px;transform:scaleX(0.865);">1</div>
<div class="a " style="left:941px;top:700px;width:533px;height:17px;background:#f0f0f0;"></div>
<div class="a " style="left:957px;top:700px;width:281px;height:17px;background:#cdcdcd;"></div>
<svg class="a" style="left:944px;top:704px" width="10" height="10" viewBox="0 0 10 10"><path d="M6.500 1.500 L2.500 4.800 L6.500 8" fill="none" stroke="#505050" stroke-width="1.900"/></svg>
<svg class="a" style="left:1461px;top:704px" width="10" height="10" viewBox="0 0 10 10"><path d="M3 1.500 L7 4.800 L3 8" fill="none" stroke="#505050" stroke-width="1.900"/></svg>
<div class="a b " style="left:704px;top:724px;width:90px;height:25px;"><svg class="a" style="left:24px;top:4px" width="12" height="15" viewBox="0 0 12 15"><defs><linearGradient id="gn" x1="0" y1="0" x2="1" y2="1"><stop offset=".25" stop-color="#fff"/><stop offset="1" stop-color="#bfdcff"/></linearGradient></defs><path d="M0.5 0.5 H8 L11.5 4 V14.5 H0.5 Z" fill="url(#gn)" stroke="#b0b2e2" stroke-width="1"/><path d="M8 0.5 V4 H11.5 Z" fill="#5aa6f4" stroke="#8ab4ee" stroke-width=".6"/></svg><span class="a t" style="left:43px;top:1px;line-height:23px;transform:scaleX(0.835)">Neu</span></div>
<div class="a b " style="left:800px;top:724px;width:90px;height:25px;"><svg class="a" style="left:12px;top:5px" width="14" height="13" viewBox="0 0 14 13"><path d="M1.5 1 L12.5 12 M12 1 L2 12" stroke="#d8143c" stroke-width="2.4" stroke-linecap="round" fill="none"/></svg><span class="a t" style="left:32px;top:1px;line-height:23px;transform:scaleX(0.835)">Löschen</span></div>
<div class="a b " style="left:896px;top:724px;width:90px;height:25px;"><svg class="a" style="left:11px;top:4px" width="16" height="16" viewBox="0 0 16 16"><path d="M0.500 0.500 H6.500 L9.500 3.500 V11.500 H0.500 Z" fill="#e8f1fd" stroke="#8fb0e4" stroke-width=".9"/><path d="M6.500 0.500 V3.500 H9.500" fill="none" stroke="#8fb0e4" stroke-width=".8"/><path d="M5.500 4.500 H11.500 L14.500 7.500 V15.500 H5.500 Z" fill="#c3dafb" stroke="#8fb0e4" stroke-width=".9"/><path d="M11.500 4.500 V7.500 H14.500" fill="none" stroke="#8fb0e4" stroke-width=".8"/></svg><span class="a t" style="left:32px;top:1px;line-height:23px;transform:scaleX(0.835)">Kopieren</span></div>
<div class="a b " style="left:990px;top:724px;width:90px;height:25px;"><svg class="a" style="left:9px;top:4px" width="15" height="16" viewBox="0 0 15 16"><rect x="0.5" y="0.5" width="14" height="15" rx="1.2" fill="#6262c9" stroke="#4545a4"/><rect x="3" y="1" width="9" height="7" fill="#f1f1f4"/><path d="M3.5 3.500 H11.500 M3.500 5.500 H11.500" stroke="#c4c4cb" stroke-width="1"/><rect x="3.500" y="10" width="8.500" height="5.500" fill="#e6e6f0"/><rect x="4.500" y="11" width="3.500" height="4" fill="#3c3ca2"/></svg><span class="a t" style="left:29px;top:1px;line-height:23px;transform:scaleX(0.835)">Speichern</span></div>
<div class="a b hot" style="left:1386px;top:724px;width:90px;height:25px;"><svg class="a" style="left:6px;top:3px" width="16" height="16" viewBox="0 0 16 16"><defs><linearGradient id="gc6" x1="0" y1="0" x2="0" y2="1"><stop offset="0" stop-color="#f0553a"/><stop offset="1" stop-color="#c8201a"/></linearGradient></defs><rect x="0.5" y="0.5" width="15" height="15" rx="2" fill="#fff"/><rect x="1.5" y="1.5" width="13" height="13" rx="1.5" fill="url(#gc6)"/><path d="M4.5 4.5 L11.5 11.5 M11.5 4.5 L4.5 11.5" stroke="#fff" stroke-width="2.6" stroke-linecap="round"/></svg><span class="a t" style="left:27px;top:1px;line-height:23px;transform:scaleX(0.835)">Schliessen</span></div>
<svg class="a" style="left:1472px;top:745px" width="10" height="10" viewBox="0 0 10 10"><g fill="#b4bfd2"><rect x="6" y="0" width="2" height="2"/><rect x="3" y="3" width="2" height="2"/><rect x="6" y="3" width="2" height="2"/><rect x="0" y="6" width="2" height="2"/><rect x="3" y="6" width="2" height="2"/><rect x="6" y="6" width="2" height="2"/></g></svg>
<svg class="a" style="left:650px;top:120px;filter:drop-shadow(1px 2px 1.500px rgba(40,40,60,.40))" width="60" height="60" viewBox="650 120 60 60"><path d="M661 174.500 L690 142.500" stroke="#fb3035" stroke-width="3.900"/><path d="M704.500 127.500 L683 138.500 L695.500 149.500 Z" fill="#fb3035"/></svg>
</body></html>
